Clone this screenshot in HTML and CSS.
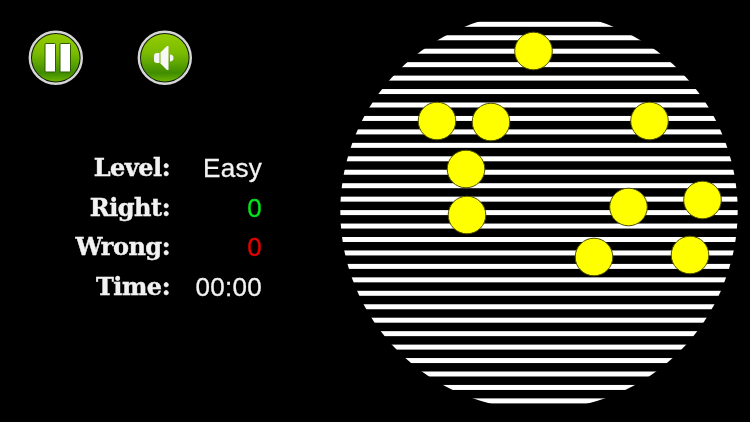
FILE: index.html
```html
<!DOCTYPE html>
<html lang="en">
<head>
<meta charset="utf-8">
<title>Game</title>
<link rel="stylesheet" href="styles.css">
</head>
<body>
<main class="screen">
  <section class="side">
    <div class="controls">
      <button class="round" aria-label="Pause">
        <svg viewBox="0 0 56 56" width="56" height="56">
          <defs>
            <linearGradient id="g1" x1="0" y1="0" x2="0" y2="1">
              <stop offset="0" stop-color="#94cc00"/>
              <stop offset=".4" stop-color="#7abb00"/>
              <stop offset=".62" stop-color="#5ca400"/>
              <stop offset=".82" stop-color="#3f8c00"/>
              <stop offset="1" stop-color="#6cb400"/>
            </linearGradient>
          </defs>
          <circle cx="27.800" cy="27.800" r="26" fill="#101a08" stroke="#d6d6d6" stroke-width="2.400"/>
          <circle cx="27.800" cy="27.800" r="23.800" fill="url(#g1)"/>
          <rect x="17" y="13.500" width="10.500" height="28.500" rx="1" fill="#fff" stroke="#2c5c00" stroke-width="1"/>
          <rect x="32" y="13.500" width="10.500" height="28.500" rx="1" fill="#fff" stroke="#2c5c00" stroke-width="1"/>
        </svg>
      </button>
      <button class="round" aria-label="Sound">
        <svg viewBox="0 0 56 56" width="56" height="56">
          <circle cx="27.800" cy="27.800" r="26" fill="#101a08" stroke="#d6d6d6" stroke-width="2.400"/>
          <circle cx="27.800" cy="27.800" r="23.800" fill="url(#g1)"/>
          <path d="M20 23h2.500v10H20a3 3 0 0 1-3-3v-4a3 3 0 0 1 3-3z" fill="#f4f4f4"/>
          <path d="M23.500 22.500L30 16h1.500v24H30L23.500 33.500z" fill="#f8f8f8"/>
          <path d="M33 24.500a3.500 3.500 0 0 1 0 7z" fill="#f4f4f4"/>
        </svg>
      </button>
    </div>
    <dl class="stats">
      <dt>Level:</dt><dd>Easy</dd>
      <dt>Right:</dt><dd class="right">0</dd>
      <dt>Wrong:</dt><dd class="wrong">0</dd>
      <dt>Time:</dt><dd>00:00</dd>
    </dl>
  </section>
  <svg class="board" viewBox="0 0 410 422" width="410" height="422" aria-label="Board">
    <defs>
      <clipPath id="disc"><circle cx="199" cy="211" r="198.700"/></clipPath>
    </defs>
    <g class="stripes" clip-path="url(#disc)">
      <rect x="0" y="21.800" width="410" height="5"/>
      <rect x="0" y="35.250" width="410" height="5"/>
      <rect x="0" y="48.700" width="410" height="5"/>
      <rect x="0" y="62.150" width="410" height="5"/>
      <rect x="0" y="75.600" width="410" height="5"/>
      <rect x="0" y="89.050" width="410" height="5"/>
      <rect x="0" y="102.500" width="410" height="5"/>
      <rect x="0" y="115.950" width="410" height="5"/>
      <rect x="0" y="129.400" width="410" height="5"/>
      <rect x="0" y="142.850" width="410" height="5"/>
      <rect x="0" y="156.300" width="410" height="5"/>
      <rect x="0" y="169.750" width="410" height="5"/>
      <rect x="0" y="183.200" width="410" height="5"/>
      <rect x="0" y="196.650" width="410" height="5"/>
      <rect x="0" y="210.100" width="410" height="5"/>
      <rect x="0" y="223.550" width="410" height="5"/>
      <rect x="0" y="237" width="410" height="5"/>
      <rect x="0" y="250.450" width="410" height="5"/>
      <rect x="0" y="263.900" width="410" height="5"/>
      <rect x="0" y="277.350" width="410" height="5"/>
      <rect x="0" y="290.800" width="410" height="5"/>
      <rect x="0" y="304.250" width="410" height="5"/>
      <rect x="0" y="317.700" width="410" height="5"/>
      <rect x="0" y="331.150" width="410" height="5"/>
      <rect x="0" y="344.600" width="410" height="5"/>
      <rect x="0" y="358.050" width="410" height="5"/>
      <rect x="0" y="371.500" width="410" height="5"/>
      <rect x="0" y="384.950" width="410" height="5"/>
      <rect x="0" y="398.400" width="410" height="5"/>
    </g>
    <g class="balls">
      <circle cx="193.500" cy="51" r="18.800"/>
      <circle cx="97" cy="121" r="18.800"/>
      <circle cx="151" cy="122" r="18.800"/>
      <circle cx="309.500" cy="121" r="18.800"/>
      <circle cx="126" cy="169" r="18.800"/>
      <circle cx="127" cy="215" r="18.800"/>
      <circle cx="288.500" cy="207" r="18.800"/>
      <circle cx="362.500" cy="200" r="18.800"/>
      <circle cx="254" cy="257" r="18.800"/>
      <circle cx="350" cy="255" r="18.800"/>
    </g>
  </svg>
</main>
</body>
</html>
```
FILE: styles.css
```css
* { box-sizing: border-box; }
html, body { margin: 0; height: 100%; background: #000; }
.screen {
  width: 750px;
  height: 422px;
  overflow: hidden;
  display: flex;
  justify-content: space-between;
  background: #000;
  filter: blur(0.55px);
}
.side { width: 340px; padding: 30px 0 0 28px; }
.controls { display: flex; gap: 53px; }
.round { width: 56px; height: 56px; padding: 0; border: 0; background: none; display: block; }
.round svg { display: block; }
.stats {
  margin: 62.500px 0 0 0;
  display: grid;
  grid-template-columns: 142px 92px;
  grid-auto-rows: 39.500px;
  align-items: center;
  color: #f2f2f2;
}
.stats dt {
  font: 700 24px/1 "DejaVu Serif", serif;
  text-align: right;
  letter-spacing: -0.5px;
  -webkit-text-stroke: 0.4px #f2f2f2;
}
.stats dd {
  margin: 0;
  font: 400 26px/1 "Liberation Sans", Arial, sans-serif;
  text-align: right;
  letter-spacing: 0.3px;
  -webkit-text-stroke: 0.3px currentColor;
}
.stats .right { color: #00e61a; }
.stats .wrong { color: #e60000; }
.board { display: block; flex: none; }
.stripes rect { fill: #fff; }
.balls circle { fill: #ffff00; stroke: #4e4e00; stroke-width: 1; }
```
